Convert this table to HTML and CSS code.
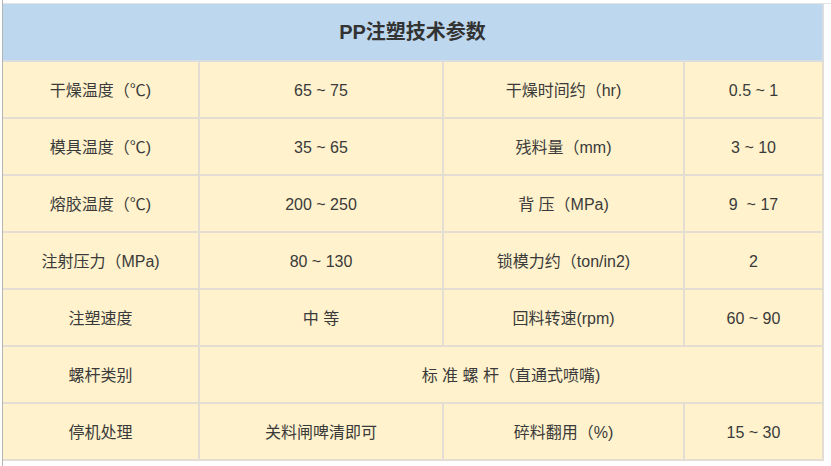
FILE: index.html
```html
<!DOCTYPE html>
<html>
<head>
<meta charset="utf-8">
<link rel="stylesheet" href="styles.css">
</head>
<body>
<div class="sheet">
  <div class="table">
    <div class="cell head">PP注塑技术参数</div>

    <div class="cell">干燥温度（℃)</div>
    <div class="cell">65 ~ 75</div>
    <div class="cell">干燥时间约（hr)</div>
    <div class="cell">0.5 ~ 1</div>

    <div class="cell">模具温度（℃)</div>
    <div class="cell">35 ~ 65</div>
    <div class="cell">残料量（mm)</div>
    <div class="cell">3 ~ 10</div>

    <div class="cell">熔胶温度（℃)</div>
    <div class="cell">200 ~ 250</div>
    <div class="cell">背 压（MPa)</div>
    <div class="cell">9  ~ 17</div>

    <div class="cell">注射压力（MPa)</div>
    <div class="cell">80 ~ 130</div>
    <div class="cell">锁模力约（ton/in2)</div>
    <div class="cell">2</div>

    <div class="cell">注塑速度</div>
    <div class="cell">中 等</div>
    <div class="cell">回料转速(rpm)</div>
    <div class="cell">60 ~ 90</div>

    <div class="cell">螺杆类别</div>
    <div class="cell wide">标 准 螺 杆（直通式喷嘴)</div>

    <div class="cell">停机处理</div>
    <div class="cell">关料闸啤清即可</div>
    <div class="cell">碎料翻用（%)</div>
    <div class="cell">15 ~ 30</div>
  </div>
</div>
</body>
</html>
```
FILE: styles.css
```css
html, body {
  margin: 0;
  padding: 0;
  background: #ffffff;
}

body {
  font-family: "Liberation Sans", "Noto Sans CJK SC", sans-serif;
  color: #3a3a3a;
}

.sheet {
  margin-left: 2px;
  border-left: 1px solid #b4b4b4;
  padding-top: 3px;
  height: 463px;
  background:
    linear-gradient(#e4e4e4, #e4e4e4) 0 3px / 100% 1px no-repeat;
}

.table {
  display: grid;
  grid-template-columns: 197px 244px 241px 139px;
  grid-template-rows: 58px repeat(7, 57px);
  width: 821px;
  padding-top: 1px;
}

.cell {
  display: flex;
  align-items: center;
  justify-content: center;
  background: #fff2cc;
  border-right: 2px solid #e3ddd3;
  border-bottom: 2px solid #e3ddd3;
  font-size: 16px;
  line-height: 20px;
  padding-top: 2px;
  white-space: pre;
}

.head {
  grid-column: 1 / 5;
  background: #bdd7ee;
  font-size: 20px;
  line-height: 24px;
  padding-top: 0;
  font-weight: bold;
  color: #333333;
  border-color: #d9dde2;
}

.wide {
  grid-column: 2 / 5;
}
```
